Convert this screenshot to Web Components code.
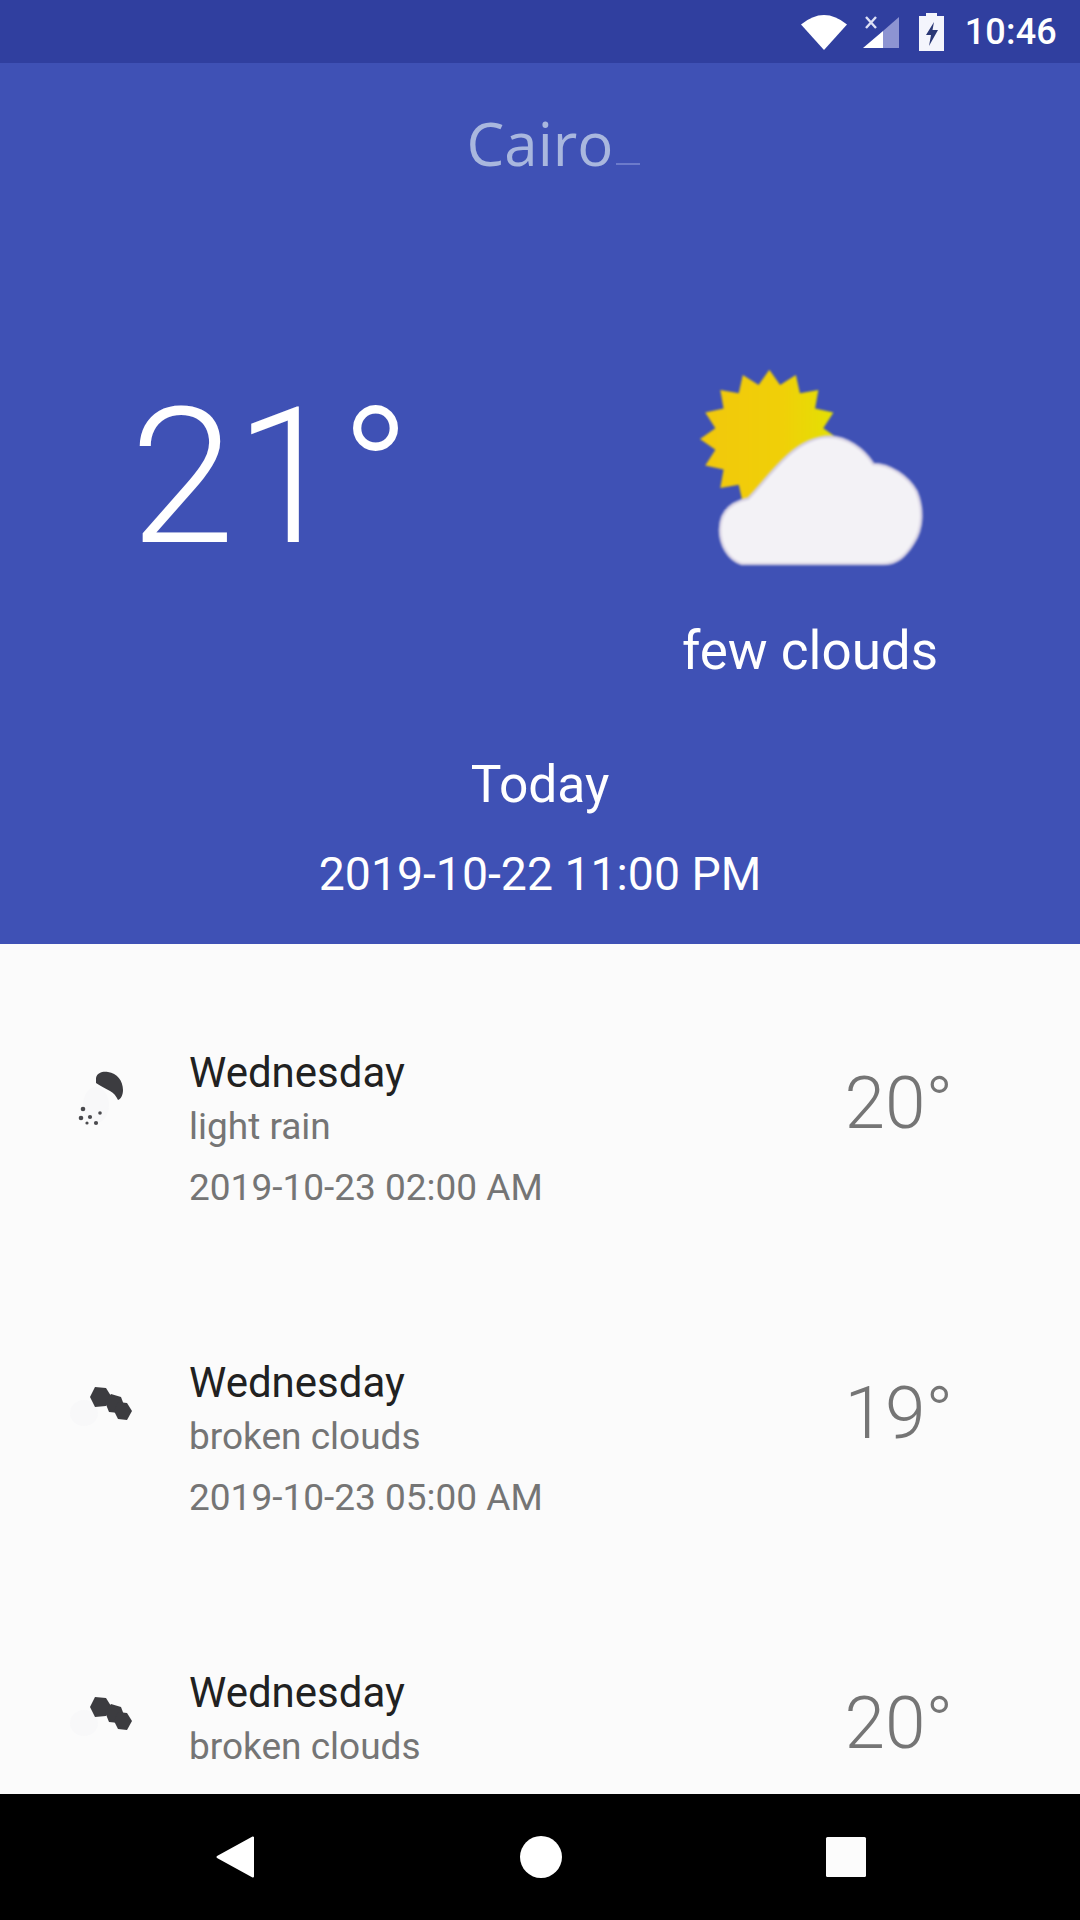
<!DOCTYPE html>
<html><head><meta charset="utf-8"><style>
html,body{margin:0;padding:0;background:#FAFAFA;font-family:Roboto,"Liberation Sans",sans-serif}
weather-app{width:1080px;height:1920px}
</style></head><body>
<template id="t-app"><style>
:host{display:flex;flex-direction:column;overflow:hidden}
.list{flex:1;min-height:0;overflow:hidden;display:flex;flex-direction:column;background:#FBFBFB}
</style>
<status-bar></status-bar><weather-hero></weather-hero>
<div class="list">
<forecast-item day="Wednesday" desc="light rain" date="2019-10-23 02:00 AM" temp="20°" icon="rain"></forecast-item>
<forecast-item day="Wednesday" desc="broken clouds" date="2019-10-23 05:00 AM" temp="19°" icon="clouds"></forecast-item>
<forecast-item day="Wednesday" desc="broken clouds" date="" temp="20°" icon="clouds"></forecast-item>
</div>
<nav-bar></nav-bar></template>

<template id="t-status"><style>
:host{display:flex;height:63px;background:#303F9F;align-items:center;justify-content:flex-end;flex:none;color:#fff;font:500 36px Roboto,sans-serif}
svg{display:block;flex:none}
.w{margin-right:15px}.s{margin-right:19px}.b{margin-right:21px}
span{margin-right:23px;letter-spacing:.2px}
</style>
<svg class="w" width="46" height="36" viewBox="0 0 46 36"><path d="M0 10.500Q23-8.500 46 10.500L23 36Z" fill="#fff"/></svg>
<svg class="s" width="38" height="36" viewBox="0 0 38 36"><path d="M37 3V34H21V17Z" fill="#8D94D2"/><path d="M21 17V34H1Z" fill="#fff"/><path d="M4 3L14 14M14 3L4 14" stroke="#DDE0F5" stroke-width="2.400" fill="none"/></svg>
<svg class="b" width="25" height="38" viewBox="0 0 25 38"><path d="M7 0H18V3H25V38H0V3H7Z" fill="#F4F5FC"/><path d="M15 9L7 22H12L10 33L19 17H13.500Z" fill="#2B3875"/></svg>
<span>10:46</span></template>

<template id="t-hero"><style>
:host{display:flex;flex-direction:column;height:881px;background:#3F51B5;color:#fff;flex:none;align-items:stretch}
h1{margin:0;padding-top:42px;height:103px;font:400 60px/76px "Open Sans",sans-serif;color:#A9B7DE;text-align:center;position:relative}
.u{position:absolute;left:616px;top:100px;width:24px;height:1.500px;background:#6C7BCB}
.row{display:grid;grid-template-columns:540px 540px;height:434px;margin-top:78px}
.t{font:300 189px/189px Roboto,sans-serif;padding:97px 0 0 130px;display:flex}
.r{display:flex;flex-direction:column;align-items:center}
.r svg{display:block;margin:54px 20px 0 0;flex:none;filter:blur(.8px)}
.d{font:400 53px/64px Roboto,sans-serif;margin:19px 0 0 0;white-space:nowrap}
.today{font:400 51.500px/64px Roboto,sans-serif;text-align:center;margin-top:33px}
.date{font:400 46.400px/60px Roboto,sans-serif;text-align:center;margin-top:27px}
</style>
<h1>Cairo<i class="u"></i></h1>
<div class="row"><div class="t">21°</div>
<div class="r"><svg width="280" height="260" viewBox="0 0 840 780">
<defs><linearGradient id="g" x1="0" x2="1" y1="0" y2="0"><stop offset="0" stop-color="#F2C80C"/><stop offset=".6" stop-color="#F0D008"/><stop offset="1" stop-color="#E2E204"/></linearGradient></defs>
<polygon class="sun" fill="url(#g)"/>
<path d="M245 672C205 660 180 615 180 570C180 520 205 488 265 475C300 440 330 395 385 345C425 310 470 290 510 290C560 292 610 325 640 372C690 372 745 410 770 455C790 505 790 565 760 610C735 650 710 672 670 672Z" fill="#F3F2F6" stroke="#D5D0E2" stroke-width="8"/></svg>
<div class="d">few clouds</div></div></div>
<div class="today">Today</div>
<div class="date">2019-10-22 11:00 PM</div></template>

<template id="t-item"><style>
:host{display:grid;grid-template-columns:189px 1fr auto;height:310px;flex:none;box-sizing:border-box;padding:101px 127px 0 0;position:relative;color:#212121}
.ic{display:flex;justify-content:flex-start}
svg{display:block;margin:0 0 0 80px;overflow:visible}
.day{font:400 42px/54px Roboto,sans-serif;margin-top:1px}
.desc{font:400 37px/44px Roboto,sans-serif;color:#757575;margin-top:5px}
.date{font:400 37px/44px Roboto,sans-serif;color:#757575;margin-top:17px;white-space:nowrap}
.temp{font:300 73px/90px Roboto,sans-serif;color:#757575;margin-top:13px}
</style>
<div class="ic"></div>
<div><div class="day"></div><div class="desc"></div><div class="date"></div></div>
<div class="temp"></div></template>

<template id="t-nav"><style>
:host{display:flex;height:126px;background:#000;flex:none;position:relative;padding:42px 0 0;box-sizing:border-box}
.g{display:grid;grid-template-columns:303px 306px 60px;width:100%;padding-left:216px;box-sizing:border-box}
svg{display:block}
</style><div class="g">
<svg width="40" height="42" viewBox="0 0 40 42"><path d="M37 1.500V40.500L1.500 21Z" fill="#fff" stroke="#fff" stroke-width="2" stroke-linejoin="round"/></svg>
<svg width="44" height="42" viewBox="0 0 44 42"><ellipse cx="22" cy="21" rx="21" ry="21" fill="#fff"/></svg>
<svg width="42" height="42" viewBox="0 0 42 42"><rect x="1" y="1" width="40" height="40" rx="1.500" fill="#FCFCFC"/></svg>
</div></template>

<script>
const tpl=id=>document.getElementById(id).content.cloneNode(true);
class Base extends HTMLElement{constructor(){super();this.attachShadow({mode:'open'}).appendChild(tpl(this.constructor.tid));}}
class WeatherApp extends Base{static tid='t-app'}
class StatusBar extends Base{static tid='t-status'}
class WeatherHero extends Base{static tid='t-hero';
connectedCallback(){const p=[],cx=328,cy=297;
for(let i=0;i<32;i++){const a=Math.PI/2+i*Math.PI/16,r=i%2?165:208;p.push((cx+r*Math.cos(a)).toFixed(1)+','+(cy-r*Math.sin(a)).toFixed(1));}
this.shadowRoot.querySelector('.sun').setAttribute('points',p.join(' '));}}
class NavBar extends Base{static tid='t-nav'}
const ICONS={
rain:`<svg width="60" height="90" viewBox="0 0 60 90"><ellipse cx="16" cy="60" rx="13" ry="18" fill="#F8F8F9"/><path d="M16 33C17 27 24 26 28 27C37 28 43 36 43 45C43 50 41 54 38 55C36 51 34 48 30 46C25 43 20 41 16 38Z" fill="#3C3C40"/><g fill="#4A4A4E"><circle cx="3" cy="64" r="2.300"/><circle cx="1" cy="73" r="2.300"/><circle cx="10" cy="72" r="2.100"/><circle cx="7" cy="78" r="1.600"/><circle cx="16" cy="78" r="2.100"/><circle cx="20" cy="68" r="1.800"/></g></svg>`,
clouds:`<svg width="60" height="90" viewBox="0 0 60 90"><ellipse cx="4" cy="58" rx="14" ry="13" fill="#F8F8F9"/><g fill="#3C3C40"><path d="M15 32L26 33L31 41L26 51L15 52L10 42Z"/><path d="M31 39L41 42L44 50L39 58L29 57L25 47Z"/><path d="M38 47L47 48L52 56L47 65L38 64L34 56Z"/></g></svg>`};
class ForecastItem extends Base{static tid='t-item';
connectedCallback(){const s=this.shadowRoot;
s.querySelector('.day').textContent=this.getAttribute('day');
s.querySelector('.desc').textContent=this.getAttribute('desc');
s.querySelector('.date').textContent=this.getAttribute('date');
s.querySelector('.temp').textContent=this.getAttribute('temp');
s.querySelector('.ic').innerHTML=ICONS[this.getAttribute('icon')];}}
customElements.define('status-bar',StatusBar);
customElements.define('weather-hero',WeatherHero);
customElements.define('forecast-item',ForecastItem);
customElements.define('nav-bar',NavBar);
customElements.define('weather-app',WeatherApp);
</script>
<weather-app></weather-app>
</body></html>
